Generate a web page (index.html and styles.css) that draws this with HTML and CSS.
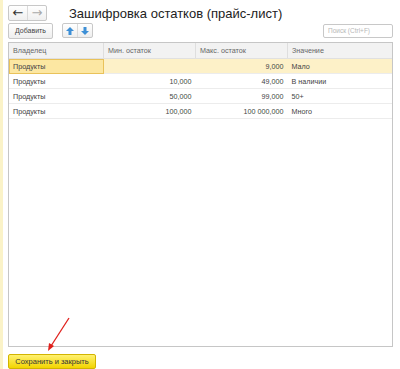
FILE: index.html
```html
<!DOCTYPE html>
<html lang="ru">
<head>
    <meta charset="UTF-8">
    <title>Зашифровка остатков (прайс-лист)</title>
    <link rel="stylesheet" href="styles.css">
</head>
<body>
    <div class="window">
        <div class="topbar">
            <div class="nav">
                <span class="navbtn">&#8592;</span>
                <span class="navbtn dim">&#8594;</span>
            </div>
            <h1>Зашифровка остатков (прайс-лист)</h1>
        </div>
        <div class="toolbar">
            <span class="btn">Добавить</span>
            <div class="arrows">
                <span class="arrow">
                    <svg width="8" height="8" viewBox="0 0 8 8"><path d="M4 0 L8 4 L5.5 4 L5.5 8 L2.5 8 L2.5 4 L0 4 Z" fill="#3d8fd6"/></svg>
                </span>
                <span class="arrow">
                    <svg width="8" height="8" viewBox="0 0 8 8"><path d="M4 8 L8 4 L5.5 4 L5.5 0 L2.5 0 L2.5 4 L0 4 Z" fill="#3d8fd6"/></svg>
                </span>
            </div>
            <span class="search">Поиск (Ctrl+F)</span>
        </div>
        <div class="grid">
            <table>
                <thead>
                    <tr>
                        <th class="owner">Владелец</th>
                        <th class="min">Мин. остаток</th>
                        <th class="max">Макс. остаток</th>
                        <th class="value">Значение</th>
                    </tr>
                </thead>
                <tbody>
                    <tr class="selected">
                        <td class="owner current">Продукты</td>
                        <td class="num"></td>
                        <td class="num">9,000</td>
                        <td>Мало</td>
                    </tr>
                    <tr>
                        <td class="owner">Продукты</td>
                        <td class="num">10,000</td>
                        <td class="num">49,000</td>
                        <td>В наличии</td>
                    </tr>
                    <tr>
                        <td class="owner">Продукты</td>
                        <td class="num">50,000</td>
                        <td class="num">99,000</td>
                        <td>50+</td>
                    </tr>
                    <tr>
                        <td class="owner">Продукты</td>
                        <td class="num">100,000</td>
                        <td class="num">100 000,000</td>
                        <td>Много</td>
                    </tr>
                </tbody>
            </table>
        </div>
        <div class="footer">
            <span class="save">Сохранить и закрыть</span>
        </div>
        <svg class="pointer" width="30" height="40" viewBox="0 0 30 40">
            <line x1="26" y1="1" x2="8" y2="29" stroke="#e0201c" stroke-width="1.3"/>
            <path d="M5 34 L6 26 L11 29 Z" fill="#e0201c"/>
        </svg>
    </div>
</body>
</html>
```

FILE: styles.css
```css
body {
    margin: 0;
    font-family: "Liberation Sans", Arial, sans-serif;
    background: #fff;
}

.window {
    position: relative;
    width: 400px;
    height: 369px;
    border-left: 3px solid #fbf3c8;
    box-sizing: border-box;
    padding: 5px 7px 0 5px;
    display: flex;
    flex-direction: column;
}

.topbar {
    display: flex;
    align-items: center;
    height: 16px;
}

.nav {
    display: flex;
    border: 1px solid #c8c8c8;
    border-radius: 2px;
    background: linear-gradient(#fff, #f0f0f0);
    height: 14px;
}

.navbtn {
    width: 18px;
    text-align: center;
    font-size: 13px;
    font-family: "DejaVu Sans", sans-serif;
    line-height: 13px;
    color: #333;
}

.navbtn + .navbtn {
    border-left: 1px solid #dadada;
}

.navbtn.dim {
    color: #aaa;
}

h1 {
    margin: 0 0 0 22px;
    font-size: 13px;
    font-weight: normal;
    color: #222;
}

.toolbar {
    display: flex;
    align-items: center;
    margin-top: 1px;
    height: 17px;
}

.btn {
    border: 1px solid #c8c8c8;
    border-radius: 2px;
    background: linear-gradient(#fff, #eee);
    font-size: 7px;
    color: #444;
    padding: 0 6px;
    height: 14px;
    line-height: 14px;
}

.arrows {
    display: flex;
    margin-left: 9px;
    border: 1px solid #c8c8c8;
    border-radius: 2px;
    background: linear-gradient(#fff, #eee);
    height: 13px;
}

.arrow {
    width: 14px;
    display: flex;
    align-items: center;
    justify-content: center;
}

.arrow + .arrow {
    border-left: 1px solid #dadada;
}

.search {
    margin-left: auto;
    width: 64px;
    height: 12px;
    line-height: 12px;
    border: 1px solid #c8c8c8;
    border-radius: 2px;
    font-size: 6.5px;
    color: #b8b8b8;
    padding-left: 4px;
}

.grid {
    margin-top: 3px;
    height: 305px;
    border: 1px solid #c6c6c6;
    box-sizing: border-box;
}

table {
    width: 100%;
    border-collapse: collapse;
    table-layout: fixed;
    font-size: 7.2px;
    color: #444;
}

th {
    background: #f2f2f2;
    font-weight: normal;
    text-align: left;
    color: #666;
    height: 15px;
    padding: 0 4px;
    border-bottom: 1px solid #e0e0e0;
}

th + th {
    border-left: 1px solid #dedede;
}

th.owner {
    width: 86px;
}

th.min,
th.max {
    width: 83px;
}

td {
    height: 14px;
    padding: 0 4px;
    border-bottom: 1px solid #ececec;
}

td.num {
    text-align: right;
}

tr.selected td {
    background: #fdf1c8;
}

tr.selected td.current {
    background: #fce7a2;
    outline: 1px solid #e9c25a;
    outline-offset: -1px;
}

.footer {
    padding-top: 3px;
}

.save {
    display: inline-block;
    width: 86px;
    height: 13px;
    line-height: 13px;
    text-align: center;
    background: linear-gradient(#fff170, #f2d400);
    border: 1px solid #d2b400;
    border-radius: 2px;
    font-size: 7.5px;
    color: #333;
}

.pointer {
    position: absolute;
    left: 40px;
    top: 317px;
}
```
